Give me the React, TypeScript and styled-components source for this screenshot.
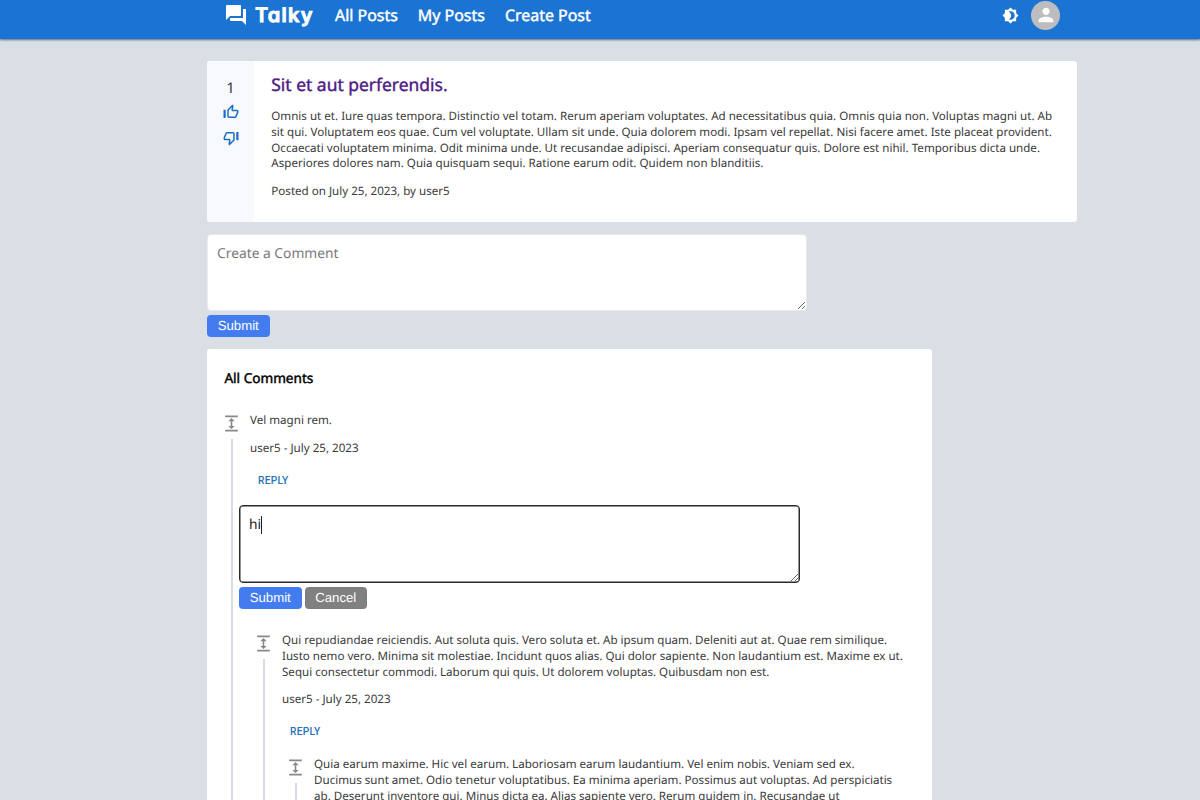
import React from 'react';
import styled, { createGlobalStyle } from 'styled-components';
import { MdForum, MdBrightness4, MdPerson, MdThumbUpOffAlt, MdThumbDownOffAlt, MdExpand } from 'react-icons/md';

const GlobalStyle = createGlobalStyle`
  * { box-sizing: border-box; }
  html, body, #root { height: 100%; }
  body {
    margin: 0;
    overflow: hidden;
    background: #dadee5;
    color: #333;
    font-family: 'Noto Sans', sans-serif;
    text-rendering: geometricPrecision;
  }
  p, h1, h2 { margin: 0; }
  svg { flex: none; }
`;

const Page = styled.div`
  height: 800px;
  overflow: hidden;
`;

const Header = styled.header`
  height: 39px;
  padding: 0 140px 9px 224px;
  display: flex;
  align-items: center;
  background: #1b74d2;
  color: #fff;
  box-shadow: 0 1px 2px rgba(50, 70, 110, 0.75);
`;

const Brand = styled.div`
  width: 111px;
  display: flex;
  align-items: center;
  gap: 7px;
`;

const BrandName = styled.span`
  font: 600 20px/30px Inter, sans-serif;
  font-feature-settings: 'cv11';
  -webkit-text-stroke: 0.9px #fff;
  stroke-linejoin: round;
  letter-spacing: 1.2px;
`;

const Nav = styled.nav`
  display: flex;
  gap: 20px;
  flex: 1;
`;

const NavLink = styled.a`
  font-size: 15.95px;
  line-height: 30px;
  -webkit-text-stroke: 0.45px currentColor;
`;

const HeaderActions = styled.div`
  display: flex;
  align-items: center;
  gap: 12px;
`;

const Avatar = styled.div`
  width: 29px;
  height: 29px;
  border-radius: 50%;
  background: #bdbdc0;
  display: grid;
  place-items: center;
`;

const Main = styled.main`
  width: 870px;
  margin: 22px 0 0 207px;
`;

const Post = styled.article`
  height: 161px;
  display: flex;
  background: #fff;
  border-radius: 3px;
  overflow: hidden;
`;

const Votes = styled.div`
  width: 47px;
  padding-top: 17px;
  display: flex;
  flex-direction: column;
  align-items: center;
  gap: 8px;
  background: #f7f9fc;
  color: #1c6fc6;
`;

const Score = styled.span`
  margin-bottom: -3px;
  font-size: 14.8px;
  line-height: 20px;
  color: #333;
`;

const PostBody = styled.div`
  padding: 12px 0 0 17.3px;
`;

const PostTitle = styled.h1`
  font-size: 17.45px;
  line-height: 24px;
  font-weight: 400;
  -webkit-text-stroke: 0.4px currentColor;
  color: #4d1a86;
`;

const Text = styled.p<{ $top?: number }>`
  margin-top: ${({ $top = 0 }) => $top}px;
  font-size: 11.6px;
  line-height: 15.85px;
  white-space: nowrap;
  color: #3a3a3a;
`;

const Field = styled.textarea<{ $focused?: boolean }>`
  display: block;
  width: ${({ $focused }) => ($focused ? 561 : 600)}px;
  height: ${({ $focused }) => ($focused ? 78 : 77)}px;
  padding: 9px 9px 8px;
  border: 1px solid ${({ $focused }) => ($focused ? '#2b2b2b' : '#e8eaee')};
  box-shadow: ${({ $focused }) => ($focused ? 'inset 0 0 0 0.5px #2b2b2b' : 'none')};
  border-radius: 4px;
  outline: 0;
  background: #fff;
  color: #222;
  resize: both;
  font: 13.8px/20px 'Noto Sans', sans-serif;
  text-rendering: geometricPrecision;
  &::placeholder { color: #7a7a7a; }
`;

const FieldWrap = styled.div<{ $top: number; $left?: number }>`
  position: relative;
  margin: ${({ $top }) => $top}px 0 0 ${({ $left = 0 }) => $left}px;
`;

const Caret = styled.span`
  position: absolute;
  left: 22px;
  top: 11px;
  width: 1px;
  height: 18px;
  background: #222;
`;

const Buttons = styled.div<{ $left?: number }>`
  margin: 4px 0 0 ${({ $left = 0 }) => $left}px;
  display: flex;
  gap: 3px;
`;

const Button = styled.button<{ $muted?: boolean }>`
  width: 62.5px;
  height: 22px;
  padding: 0;
  border: 0;
  border-radius: 4px;
  color: #fff;
  background: ${({ $muted }) => ($muted ? '#808080' : '#437cee')};
  font: 13.2px/22px 'Liberation Sans', Arial, sans-serif;
  text-rendering: geometricPrecision;
`;

const Comments = styled.section`
  width: 725px;
  height: 700px;
  margin-top: 11.6px;
  padding: 18px 17px 0;
  background: #fff;
  border-radius: 3px;
`;

const CommentsTitle = styled.h2`
  margin-bottom: 23.8px;
  padding-left: 0.4px;
  font-size: 13.6px;
  line-height: 22px;
  font-weight: 400;
  -webkit-text-stroke: 0.45px currentColor;
  color: #000;
`;

const Thread = styled.div`
  display: flex;
`;

const Rail = styled.div`
  width: 16px;
  flex: none;
  padding-top: 1px;
  display: flex;
  flex-direction: column;
  align-items: center;
  gap: 6px;
  color: #888;

  svg { margin-left: -1px; }
`;

const Line = styled.div`
  width: 2px;
  flex: 1;
  min-height: 500px;
  background: #d9dce3;
`;

const ThreadBody = styled.div`
  flex: 1;
  min-width: 0;
`;

const CommentContent = styled.div`
  padding-left: 10px;
`;

const Nested = styled.div<{ $top: number }>`
  padding-left: 16px;
  margin-top: ${({ $top }) => $top}px;
`;

const Reply = styled.button`
  display: block;
  margin: 16px 0 0 8px;
  padding: 0;
  border: 0;
  background: none;
  color: #2673b8;
  font: 500 10.2px/16px Roboto, sans-serif;
  letter-spacing: 0.3px;
`;

interface CommentProps {
  lines: string[];
  metaGap?: number;
  children?: React.ReactNode;
}

function Comment({ lines, metaGap = 12, children }: CommentProps) {
  return (
    <Thread>
      <Rail>
        <MdExpand size={19} />
        <Line />
      </Rail>
      <ThreadBody>
        <CommentContent>
          {lines.map((line) => <Text key={line}>{line}</Text>)}
          <Text $top={metaGap}>user5 - July 25, 2023</Text>
          <Reply>REPLY</Reply>
        </CommentContent>
        {children}
      </ThreadBody>
    </Thread>
  );
}

const postLines = [
  'Omnis ut et. Iure quas tempora. Distinctio vel totam. Rerum aperiam voluptates. Ad necessitatibus quia. Omnis quia non. Voluptas magni ut. Ab',
  'sit qui. Voluptatem eos quae. Cum vel voluptate. Ullam sit unde. Quia dolorem modi. Ipsam vel repellat. Nisi facere amet. Iste placeat provident.',
  'Occaecati voluptatem minima. Odit minima unde. Ut recusandae adipisci. Aperiam consequatur quis. Dolore est nihil. Temporibus dicta unde.',
  'Asperiores dolores nam. Quia quisquam sequi. Ratione earum odit. Quidem non blanditiis.',
];

const replyLines = [
  'Qui repudiandae reiciendis. Aut soluta quis. Vero soluta et. Ab ipsum quam. Deleniti aut at. Quae rem similique.',
  'Iusto nemo vero. Minima sit molestiae. Incidunt quos alias. Qui dolor sapiente. Non laudantium est. Maxime ex ut.',
  'Sequi consectetur commodi. Laborum qui quis. Ut dolorem voluptas. Quibusdam non est.',
];

const nestedLines = [
  'Quia earum maxime. Hic vel earum. Laboriosam earum laudantium. Vel enim nobis. Veniam sed ex.',
  'Ducimus sunt amet. Odio tenetur voluptatibus. Ea minima aperiam. Possimus aut voluptas. Ad perspiciatis',
  'ab. Deserunt inventore qui. Minus dicta ea. Alias sapiente vero. Rerum quidem in. Recusandae ut',
];

export default function App() {
  return (
    <Page>
      <GlobalStyle />
      <Header>
        <Brand>
          <MdForum size={24} />
          <BrandName>Talky</BrandName>
        </Brand>
        <Nav>
          <NavLink>All Posts</NavLink>
          <NavLink>My Posts</NavLink>
          <NavLink>Create Post</NavLink>
        </Nav>
        <HeaderActions>
          <MdBrightness4 size={17} />
          <Avatar><MdPerson size={22} /></Avatar>
        </HeaderActions>
      </Header>
      <Main>
        <Post>
          <Votes>
            <Score>1</Score>
            <MdThumbUpOffAlt size={18} />
            <MdThumbDownOffAlt size={18} />
          </Votes>
          <PostBody>
            <PostTitle>Sit et aut perferendis.</PostTitle>
            <Text $top={11.9}>{postLines[0]}</Text>
            {postLines.slice(1).map((line) => <Text key={line}>{line}</Text>)}
            <Text $top={12}>Posted on July 25, 2023, by user5</Text>
          </PostBody>
        </Post>
        <FieldWrap $top={12.4}>
          <Field placeholder="Create a Comment" />
        </FieldWrap>
        <Buttons><Button>Submit</Button></Buttons>
        <Comments>
          <CommentsTitle>All Comments</CommentsTitle>
          <Comment lines={['Vel magni rem.']} metaGap={12.6}>
            <FieldWrap $top={16} $left={-1}>
              <Field $focused defaultValue="hi" />
              <Caret />
            </FieldWrap>
            <Buttons $left={-1}>
              <Button>Submit</Button>
              <Button $muted>Cancel</Button>
            </Buttons>
            <Nested $top={24}>
              <Comment lines={replyLines} metaGap={11.6}>
                <Nested $top={17.3}>
                  <Comment lines={nestedLines} />
                </Nested>
              </Comment>
            </Nested>
          </Comment>
        </Comments>
      </Main>
    </Page>
  );
}
